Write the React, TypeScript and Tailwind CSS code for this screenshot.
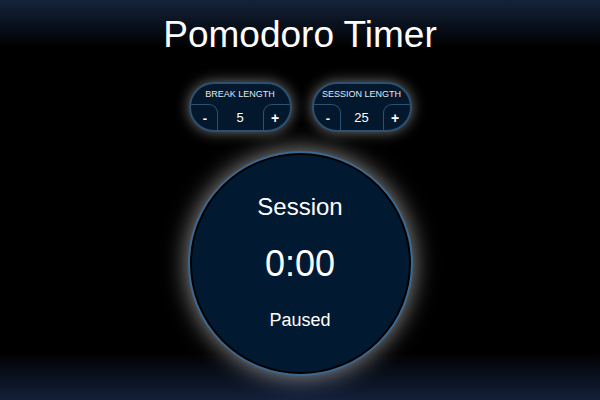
import { useState } from "react"

type LengthControlProps = {
  label: string
  value: number
  width: string
  onDec: () => void
  onInc: () => void
}

function LengthControl({ label, value, width, onDec, onInc }: LengthControlProps) {
  return (
    <div
      className={`${width} h-[50px] rounded-[25px] border-2 border-[#2c5070] bg-[#03182d] overflow-hidden flex flex-col shadow-[0_0_14px_rgba(255,255,255,0.45)]`}
    >
      <div className="h-[20px] pt-[6px] text-[9px] leading-none text-center text-[#e4e8ee]">{label}</div>
      <div className="flex flex-1">
        <button
          onClick={onDec}
          className="w-[27px] border-t border-r border-[#2c5070] rounded-tr-[9px] text-[13px] font-bold text-white pl-[3px] pt-[2px]"
        >
          -
        </button>
        <div className="flex-1 flex items-center justify-center pt-[2px] text-[13px] text-white">{value}</div>
        <button
          onClick={onInc}
          className="w-[27px] border-t border-l border-[#2c5070] rounded-tl-[9px] text-[14px] font-bold text-white pr-[3px] pt-[2px]"
        >
          +
        </button>
      </div>
    </div>
  )
}

export default function App() {
  const [breakLength, setBreakLength] = useState(5)
  const [sessionLength, setSessionLength] = useState(25)

  return (
    <div className="h-[400px] w-full overflow-hidden flex flex-col items-center text-white font-['Liberation_Sans',Arial,sans-serif] bg-[linear-gradient(#14233b,#000_12%,#000_88%,#13203a)]">
      <h1 className="mt-[16px] text-[37px] leading-none">Pomodoro Timer</h1>

      <div className="mt-[29px] flex gap-[20px]">
        <LengthControl
          label="BREAK LENGTH"
          value={breakLength}
          width="w-[103px]"
          onDec={() => setBreakLength(Math.max(1, breakLength - 1))}
          onInc={() => setBreakLength(Math.min(60, breakLength + 1))}
        />
        <LengthControl
          label="SESSION LENGTH"
          value={sessionLength}
          width="w-[100px]"
          onDec={() => setSessionLength(Math.max(1, sessionLength - 1))}
          onInc={() => setSessionLength(Math.min(60, sessionLength + 1))}
        />
      </div>

      <div className="mt-[19px] w-[225px] h-[225px] shrink-0 rounded-full border-2 border-[#3a6890] bg-[#021a31] flex flex-col items-center pt-[42px] shadow-[inset_0_0_0_2px_#000,0_0_24px_rgba(255,255,255,0.6)]">
        <div className="text-[24px] leading-none">Session</div>
        <div className="mt-[27px] text-[36px] leading-none">0:00</div>
        <div className="mt-[29px] text-[18px] leading-none">Paused</div>
      </div>
    </div>
  )
}
